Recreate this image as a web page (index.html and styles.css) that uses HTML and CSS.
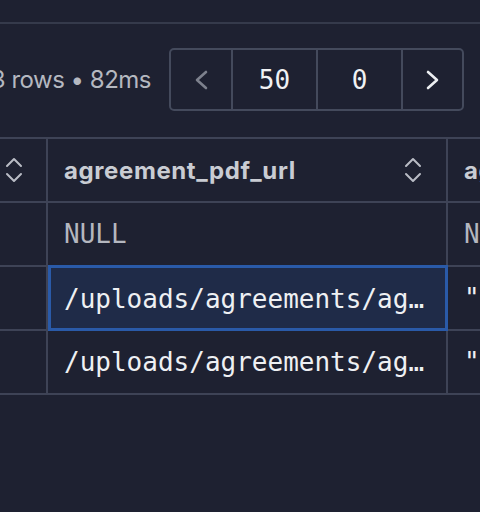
FILE: index.html
```html
<!DOCTYPE html>
<html>
<head>
<meta charset="utf-8">
<link rel="stylesheet" href="styles.css">
</head>
<body>
<div class="topbar"></div>
<div class="toolbar">
  <span class="stats">3 rows • 82ms</span>
  <div class="pager">
    <div class="seg nav disabled"><svg width="14" height="20" viewBox="0 0 14 20"><path d="M12 2 L3 10 L12 18" fill="none" stroke="currentColor" stroke-width="2.6" stroke-linecap="round" stroke-linejoin="round"/></svg></div>
    <div class="seg num wide">50</div>
    <div class="seg num wide">0</div>
    <div class="seg nav"><svg width="14" height="20" viewBox="0 0 14 20"><path d="M2 2 L11 10 L2 18" fill="none" stroke="currentColor" stroke-width="2.6" stroke-linecap="round" stroke-linejoin="round"/></svg></div>
  </div>
</div>
<div class="table">
  <div class="row head">
    <div class="cell c1"><svg class="sort" width="18" height="26" viewBox="0 0 18 26"><path d="M2 9 L9 2 L16 9 M2 17 L9 24 L16 17" fill="none" stroke="currentColor" stroke-width="2" stroke-linecap="round" stroke-linejoin="round"/></svg></div>
    <div class="cell c2"><span class="label">agreement_pdf_url</span><svg class="sort" width="18" height="26" viewBox="0 0 18 26"><path d="M2 9 L9 2 L16 9 M2 17 L9 24 L16 17" fill="none" stroke="currentColor" stroke-width="2" stroke-linecap="round" stroke-linejoin="round"/></svg></div>
    <div class="cell c3"><span class="label">agreement_signed</span></div>
  </div>
  <div class="row">
    <div class="cell c1"></div>
    <div class="cell c2"><span class="val null">NULL</span></div>
    <div class="cell c3"><span class="val null">NULL</span></div>
  </div>
  <div class="row">
    <div class="cell c1"></div>
    <div class="cell c2 selected"><span class="val">/uploads/agreements/agreement_1042.pdf</span></div>
    <div class="cell c3"><span class="val">"2024-03-01"</span></div>
  </div>
  <div class="row">
    <div class="cell c1"></div>
    <div class="cell c2"><span class="val">/uploads/agreements/agreement_1043.pdf</span></div>
    <div class="cell c3"><span class="val">"2024-03-02"</span></div>
  </div>
</div>
</body>
</html>
```
FILE: styles.css
```css
html, body {
  margin: 0;
  padding: 0;
  background: #1e2131;
  width: 480px;
  height: 512px;
  overflow: hidden;
}
body {
  font-family: Inter, "Noto Sans", sans-serif;
  color: #c9ccd3;
}
.topbar {
  height: 22px;
  border-bottom: 2px solid #353a4b;
}
.toolbar {
  display: flex;
  justify-content: flex-end;
  align-items: center;
  gap: 18px;
  padding: 24px 16px 0 0;
  height: 63px;
}
.stats {
  white-space: nowrap;
  font-size: 24px;
  letter-spacing: -0.5px;
  color: #b5b8c0;
}
.pager {
  display: flex;
  height: 63px;
  box-sizing: border-box;
  border: 2px solid #444a5c;
  border-radius: 5px;
  flex-shrink: 0;
}
.seg {
  display: flex;
  align-items: center;
  justify-content: center;
  box-sizing: border-box;
}
.seg + .seg {
  border-left: 2px solid #444a5c;
}
.nav {
  width: 61px;
  color: #eceef1;
}
.seg.nav:first-child {
  width: 60px;
}
.nav.disabled {
  color: #7d818d;
}
.num {
  width: 85px;
  font-family: "DejaVu Sans Mono", monospace;
  font-size: 26px;
  color: #f1f2f4;
}
.table {
  margin-top: 26px;
  border-top: 2px solid #3e4356;
}
.row {
  display: flex;
  height: 64px;
  box-sizing: border-box;
  border-bottom: 2px solid #3e4356;
}
.cell {
  display: flex;
  align-items: center;
  box-sizing: border-box;
  overflow: hidden;
}
.c1 {
  width: 48px;
  flex-shrink: 0;
  border-right: 2px solid #3e4356;
  padding-left: 5px;
}
.c2 {
  width: 400px;
  flex-shrink: 0;
  border-right: 2px solid #3e4356;
  padding: 0 10px 0 16px;
  justify-content: space-between;
}
.c2 .sort {
  margin-right: 14px;
}
.c3 {
  flex: 1;
  padding-left: 16px;
  white-space: nowrap;
}
.sort {
  color: #b9bcc5;
  flex-shrink: 0;
}
.label {
  font-weight: 700;
  font-size: 24px;
  letter-spacing: 0.6px;
  color: #c9ccd3;
  white-space: nowrap;
}
.val {
  font-family: "DejaVu Sans Mono", monospace;
  font-size: 26px;
  color: #eef0f3;
  white-space: nowrap;
  overflow: hidden;
  text-overflow: ellipsis;
  min-width: 0;
}
.val.null {
  color: #b4b7bf;
}
.selected {
  background: #1f2b48;
  outline: 3px solid #2a5aa8;
  outline-offset: -3px;
  margin-top: -2px;
  height: 66px;
  padding-top: 2px;
  border-right: 2px solid transparent;
}
```
